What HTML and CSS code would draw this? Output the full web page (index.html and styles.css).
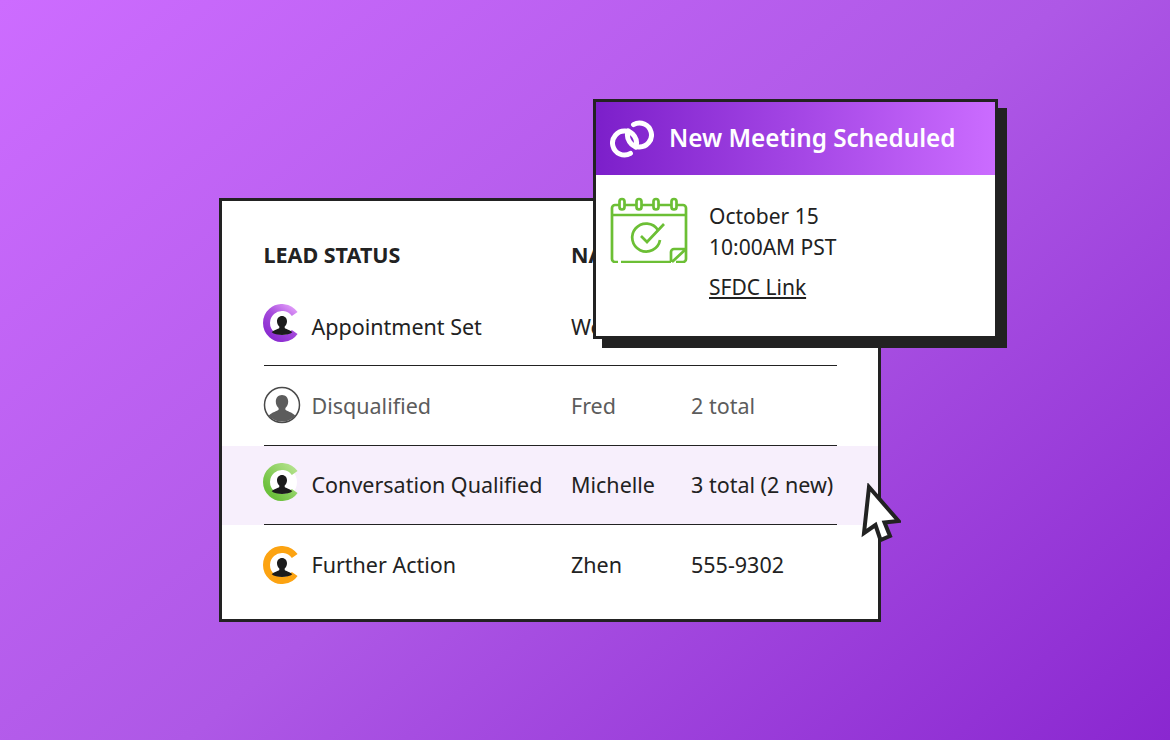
FILE: index.html
```
<!DOCTYPE html>
<html lang="en">
<head>
<meta charset="utf-8">
<title>New Meeting Scheduled</title>
<link rel="stylesheet" href="styles.css">
</head>
<body>
<svg class="defs" width="0" height="0" aria-hidden="true">
  <defs>
    <linearGradient id="ring-purple" x1="0.9" y1="0" x2="0.2" y2="1"><stop offset="0" stop-color="#dc94f7"/><stop offset="0.45" stop-color="#a64bdc"/><stop offset="1" stop-color="#8a2bd0"/></linearGradient>
    <linearGradient id="ring-green" x1="0.9" y1="0" x2="0.1" y2="0.8"><stop offset="0" stop-color="#b0e088"/><stop offset="1" stop-color="#6cc03c"/></linearGradient>
    <symbol id="person" viewBox="0 0 38 38">
      <path d="M19 12c-3 0-5 2.300-5 5.300 0 2.200.9 4 2.300 5.200v1.500c-1.100 1.200-5.600 1.800-7.600 4.200 2.200 1.800 6 2.800 10.300 2.800s8.100-1 10.300-2.800c-2-2.400-6.500-3-7.600-4.200v-1.500c1.400-1.200 2.300-3 2.300-5.200 0-3-2-5.300-5-5.300z"/>
    </symbol>
    <symbol id="person-big" viewBox="0 0 38 38">
      <path d="M19 9c-3.700 0-6.200 2.800-6.200 6.500 0 2.800 1.100 5 2.800 6.400v1.800c-1.300 1.500-6.600 2.300-10 6 3.300 3.500 8 5.800 13.400 5.800s10.100-2.300 13.400-5.800c-3.400-3.700-8.700-4.500-10-6v-1.800c1.700-1.400 2.800-3.600 2.800-6.400 0-3.700-2.500-6.500-6.200-6.500z"/>
    </symbol>
  </defs>
</svg>

<main class="card">
  <div class="row head">
    <div class="cells">
      <span>LEAD STATUS</span>
      <span>NAME</span>
    </div>
  </div>
  <div class="row">
    <div class="cells">
      <span class="status">
        <svg class="avatar lifted" viewBox="0 0 38 38"><path class="ring" stroke="url(#ring-purple)" d="M31.700 10.100A15.500 15.500 0 1 0 31.700 27.900"/><use href="#person" fill="#1c1c1c"/></svg>
        Appointment Set
      </span>
      <span>Wendy</span>
    </div>
  </div>
  <div class="row muted">
    <div class="cells">
      <span class="status">
        <svg class="avatar" viewBox="0 0 38 38"><circle class="outline" cx="19" cy="19" r="17.500"/><use href="#person-big" fill="#5c5c5c"/></svg>
        Disqualified
      </span>
      <span>Fred</span>
      <span>2 total</span>
    </div>
  </div>
  <div class="row active">
    <div class="cells">
      <span class="status">
        <svg class="avatar lifted" viewBox="0 0 38 38"><circle class="disc" cx="19" cy="19" r="15"/><path class="ring" stroke="url(#ring-green)" d="M31.700 10.100A15.500 15.500 0 1 0 31.700 27.900"/><use href="#person" fill="#1c1c1c"/></svg>
        Conversation Qualified
      </span>
      <span>Michelle</span>
      <span>3 total (2 new)</span>
    </div>
  </div>
  <div class="row last">
    <div class="cells">
      <span class="status">
        <svg class="avatar" viewBox="0 0 38 38"><path class="ring" stroke="#fca311" d="M31.700 10.100A15.500 15.500 0 1 0 31.700 27.900"/><use href="#person" fill="#1c1c1c"/></svg>
        Further Action
      </span>
      <span>Zhen</span>
      <span>555-9302</span>
    </div>
  </div>
</main>

<svg class="cursor" viewBox="0 0 40 60">
  <path d="M8 4 L3 50 L14.500 42 L19.500 57 L29 53 L23.500 39.500 L37.500 38 Z"/>
</svg>

<aside class="popup">
  <header class="popup-head">
    <svg class="link-icon" viewBox="0 0 44 38">
      <path d="M20.500 33.400A12 12 0 1 1 25.800 27.100"/>
      <path d="M23.500 4.600A12 12 0 1 1 18.200 10.900"/>
    </svg>
    <h1>New Meeting Scheduled</h1>
  </header>
  <div class="popup-body">
    <svg class="calendar" viewBox="0 0 78 66">
      <path d="M9 8H5a3 3 0 0 0-3 3v51a3 3 0 0 0 3 3h3M11 65h50M66 65h7a3 3 0 0 0 3-3V11a3 3 0 0 0-3-3h-6"/>
      <path d="M2 18h74"/>
      <path d="M15 8h11M32 8h11M49 8h12"/>
      <rect x="9.500" y="2" width="5" height="10.500" rx="2.500"/>
      <rect x="26.500" y="2" width="5" height="10.500" rx="2.500"/>
      <rect x="43.500" y="2" width="5" height="10.500" rx="2.500"/>
      <rect x="61.500" y="2" width="5" height="10.500" rx="2.500"/>
      <path d="M48 33A14 14 0 1 0 50 43"/>
      <path d="M31 39l6 6 17-18"/>
      <path d="M61 65V55a3 3 0 0 1 3-3h12M62 65l14-13"/>
    </svg>
    <div class="details">
      <p>October 15</p>
      <p>10:00AM PST</p>
      <a href="#">SFDC Link</a>
    </div>
  </div>
</aside>
</body>
</html>
```
FILE: styles.css
```
* {
  box-sizing: border-box;
}

html,
body {
  height: 740px;
  margin: 0;
  overflow: hidden;
}

body {
  position: relative;
  padding: 198px 0 0 219px;
  font-family: "Noto Sans", "Open Sans", sans-serif;
  color: #222;
  background: linear-gradient(140deg, #cd6cff 0%, #ae58e6 52%, #8a27d0 100%);
}

.defs {
  position: absolute;
}

.card {
  width: 662px;
  height: 424px;
  padding-top: 18px;
  background: #fff;
  border: 3px solid #222;
}

.row {
  padding: 0 41px 0 41.500px;
  height: 79.300px;
  font-size: 21.500px;
}

.cells {
  display: grid;
  grid-template-columns: 307.500px 120px 1fr;
  align-items: center;
  height: 100%;
  border-bottom: 1px solid #222;
  white-space: nowrap;
}

.head {
  height: 68px;
  font-weight: 700;
}

.head .cells {
  padding-top: 3px;
  border-bottom: 0;
}

.last .cells {
  border-bottom: 0;
}

.active {
  background: #f7effc;
}

.muted {
  color: #5c5c5c;
}

.status {
  display: flex;
  align-items: center;
  gap: 10.500px;
}

.avatar {
  width: 38px;
  height: 38px;
  margin-left: -0.500px;
  flex: none;
}

.lifted {
  margin-bottom: 6px;
}

.ring {
  fill: none;
  stroke-width: 7;
}

.disc {
  fill: #fff;
}

.outline {
  fill: #fff;
  stroke: #4a4a4a;
  stroke-width: 1.500;
}

.cursor {
  position: absolute;
  left: 861px;
  top: 483px;
  width: 40px;
  height: 60px;
  fill: #fff;
  stroke: #222;
  stroke-width: 4;
}

.popup {
  position: absolute;
  left: 593px;
  top: 99px;
  width: 405px;
  height: 240px;
  background: #fff;
  border: 3px solid #222;
  box-shadow: 9px 9px 0 #222;
}

.popup-head {
  display: flex;
  align-items: center;
  gap: 15px;
  height: 73px;
  padding-left: 14px;
  background: linear-gradient(90deg, #7c1fca 0%, #cb6cff 100%);
}

.popup-head h1 {
  margin: 0 0 2px;
  font-size: 24.300px;
  font-weight: 600;
  color: #fff;
  white-space: nowrap;
}

.link-icon {
  width: 44px;
  height: 38px;
  flex: none;
  fill: none;
  stroke: #fff;
  stroke-width: 5;
  stroke-linecap: round;
}

.popup-body {
  display: flex;
  gap: 21px;
  padding: 22px 0 0 14px;
  align-items: flex-start;
}

.calendar {
  width: 78px;
  height: 66px;
  flex: none;
  fill: none;
  stroke: #6cbf35;
  stroke-width: 2.700;
}

.details {
  padding-top: 4px;
  font-size: 21px;
  line-height: 31px;
}

.details p {
  margin: 0;
}

.details a {
  display: block;
  margin-top: 9px;
  color: #222;
}
```
